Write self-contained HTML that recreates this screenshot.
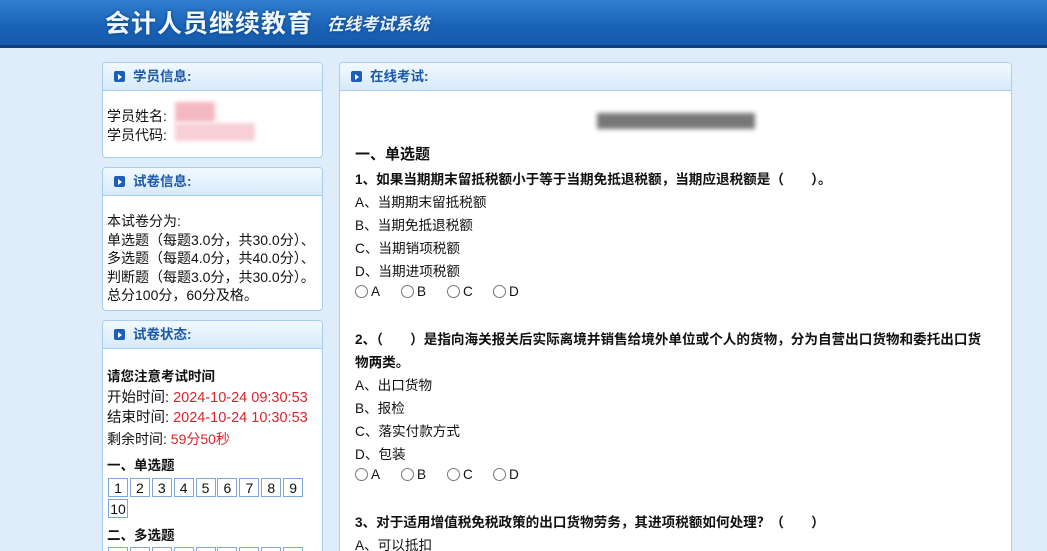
<!DOCTYPE html><html><head><meta charset="utf-8"><style>
*{margin:0;padding:0;box-sizing:border-box}
html,body{width:1047px;height:551px;overflow:hidden}
body{background:#deedf9;font-family:"Liberation Sans","Noto Sans CJK SC",sans-serif;font-size:14px;color:#111;position:relative}
.hd{position:absolute;left:0;top:0;width:1047px;height:48px;background:linear-gradient(#2f7fd0,#1a63b8 60%,#155aab);border-bottom:3px solid #0e3f7c}
.hd .t{position:absolute;left:105px;top:4px;font-size:25px;font-weight:bold;color:#eef6ff;letter-spacing:1px;text-shadow:0 0 3px #0a3a70}
.hd .s{position:absolute;left:327px;top:10px;font-size:17px;font-style:italic;font-weight:bold;color:#e8f2ff;text-shadow:0 0 3px #0a3a70}
.p{position:absolute;background:#fff;border:1px solid #a9cdee;border-radius:4px;overflow:hidden}
.ph{height:28px;background:linear-gradient(#f2f9ff,#d6eafa);border-bottom:1px solid #a9cdee;color:#1d58a6;font-weight:bold;font-size:13.5px;line-height:28px;padding-left:30px;position:relative}
.ph:before{content:"";position:absolute;left:11px;top:8px;width:11px;height:11px;background:#1d5fb8;border-radius:2px}
.ph:after{content:"";position:absolute;left:15px;top:11px;border-left:4px solid #fff;border-top:3px solid transparent;border-bottom:3px solid transparent}
.l{position:absolute;white-space:nowrap}
.q{font-size:13.6px}
.r{color:#d4262c}
.b{font-weight:bold}
.bx{display:inline-block;width:20px;height:19px;border:1px solid #7fa6d8;text-align:center;line-height:18px;font-size:14px;margin-right:-2px}
.rd{display:inline-block;width:13px;height:13px;border:1px solid #777;border-radius:50%;vertical-align:-2px;margin-right:3px}
.blur{position:absolute;background:#f4b8c0;filter:blur(2px)}
</style></head><body>
<div class="hd"><div class="t">会计人员继续教育</div><div class="s">在线考试系统</div></div>

<div class="p" style="left:102px;top:62px;width:221px;height:96px"><div class="ph">学员信息:</div></div>
<div class="l" style="left:107px;top:106px">学员姓名:</div>
<div class="l" style="left:107px;top:125px">学员代码:</div>
<div class="blur" style="left:175px;top:102px;width:40px;height:20px"></div>
<div class="blur" style="left:175px;top:123px;width:80px;height:18px;background:#f7cfd5"></div>

<div class="p" style="left:102px;top:167px;width:221px;height:144px"><div class="ph">试卷信息:</div></div>
<div class="l" style="left:107px;top:212px;line-height:18.5px">本试卷分为:<br>单选题（每题3.0分，共30.0分）、<br>多选题（每题4.0分，共40.0分）、<br>判断题（每题3.0分，共30.0分）。<br>总分100分，60分及格。</div>

<div class="p" style="left:102px;top:320px;width:221px;height:240px"><div class="ph">试卷状态:</div></div>
<div class="l b" style="left:107px;top:365px;font-size:13.5px">请您注意考试时间</div>
<div class="l" style="left:107px;top:386px;font-size:14.5px">开始时间: <span class="r">2024-10-24 09:30:53</span></div>
<div class="l" style="left:107px;top:406px;font-size:14.5px">结束时间: <span class="r">2024-10-24 10:30:53</span></div>
<div class="l" style="left:107px;top:429px">剩余时间: <span class="r">59分50秒</span></div>
<div class="l b" style="left:107px;top:454px;font-size:13.5px">一、单选题</div>
<div class="l" style="left:108px;top:478px"><span class="bx">1</span> <span class="bx">2</span> <span class="bx">3</span> <span class="bx">4</span> <span class="bx">5</span> <span class="bx">6</span> <span class="bx">7</span> <span class="bx">8</span> <span class="bx">9</span></div>
<div class="l" style="left:108px;top:499px"><span class="bx">10</span></div>
<div class="l b" style="left:107px;top:524px;font-size:13.5px">二、多选题</div>
<div class="l" style="left:108px;top:547px"><span class="bx"> </span> <span class="bx"> </span> <span class="bx"> </span> <span class="bx"> </span> <span class="bx"> </span> <span class="bx"> </span> <span class="bx"> </span> <span class="bx"> </span> <span class="bx"> </span></div>

<div class="p" style="left:339px;top:62px;width:673px;height:500px"><div class="ph">在线考试:</div></div>
<div style="position:absolute;left:597px;top:113px;width:158px;height:16px;background:#777;filter:blur(2.5px)"></div>
<div class="l b" style="left:355px;top:143px;font-size:15px">一、单选题</div>
<div class="l b q" style="left:355px;top:168px">1、如果当期期末留抵税额小于等于当期免抵退税额，当期应退税额是（　　）。</div>
<div class="l q" style="left:355px;top:191px">A、当期期末留抵税额</div>
<div class="l q" style="left:355px;top:214px">B、当期免抵退税额</div>
<div class="l q" style="left:355px;top:237px">C、当期销项税额</div>
<div class="l q" style="left:355px;top:260px">D、当期进项税额</div>
<div class="l q" style="left:355px;top:284px"><span class="rd"></span>A</div>
<div class="l q" style="left:401px;top:284px"><span class="rd"></span>B</div>
<div class="l q" style="left:447px;top:284px"><span class="rd"></span>C</div>
<div class="l q" style="left:493px;top:284px"><span class="rd"></span>D</div>
<div class="l b q" style="left:355px;top:328px">2、（　　）是指向海关报关后实际离境并销售给境外单位或个人的货物，分为自营出口货物和委托出口货</div>
<div class="l b q" style="left:355px;top:351px">物两类。</div>
<div class="l q" style="left:355px;top:374px">A、出口货物</div>
<div class="l q" style="left:355px;top:397px">B、报检</div>
<div class="l q" style="left:355px;top:420px">C、落实付款方式</div>
<div class="l q" style="left:355px;top:443px">D、包装</div>
<div class="l q" style="left:355px;top:467px"><span class="rd"></span>A</div>
<div class="l q" style="left:401px;top:467px"><span class="rd"></span>B</div>
<div class="l q" style="left:447px;top:467px"><span class="rd"></span>C</div>
<div class="l q" style="left:493px;top:467px"><span class="rd"></span>D</div>
<div class="l b q" style="left:355px;top:511px">3、对于适用增值税免税政策的出口货物劳务，其进项税额如何处理？（　　）</div>
<div class="l q" style="left:355px;top:534px">A、可以抵扣</div>
</body></html>
